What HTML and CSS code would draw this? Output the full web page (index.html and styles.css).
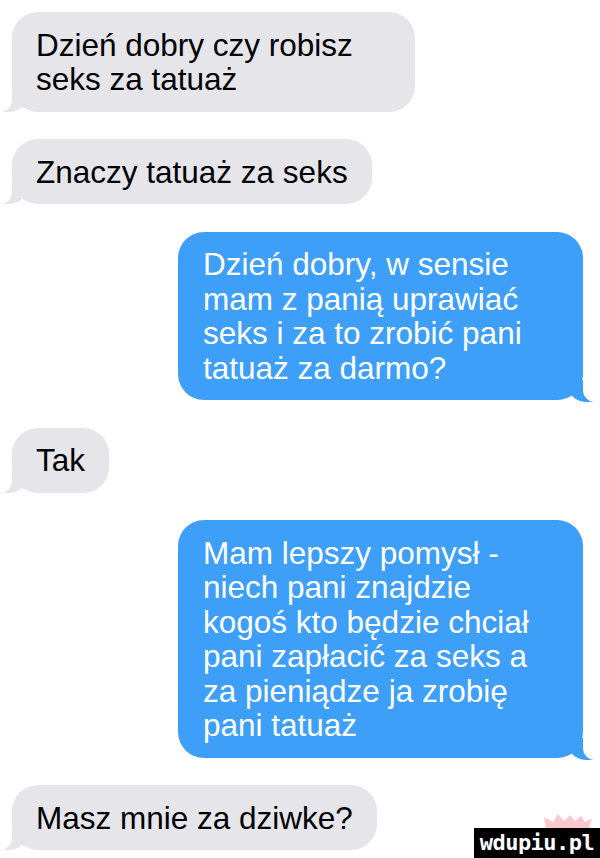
FILE: index.html
```html
<!DOCTYPE html>
<html lang="pl">
<head>
    <meta charset="UTF-8">
    <meta name="viewport" content="width=device-width, initial-scale=1.0">
    <title>Wiadomości</title>
    <link rel="stylesheet" href="styles.css">
</head>
<body>
    <div class="chat">
        <div class="bubble in wide-in">Dzień dobry czy robisz seks za tatuaż</div>
        <div class="bubble in">Znaczy tatuaż za seks</div>
        <div class="bubble out wide">Dzień dobry, w sensie mam z panią uprawiać seks i za to zrobić pani tatuaż za darmo?</div>
        <div class="bubble in">Tak</div>
        <div class="bubble out wide">Mam lepszy pomysł - niech pani znajdzie kogoś kto będzie chciał pani zapłacić za seks a za pieniądze ja zrobię pani tatuaż</div>
        <div class="bubble in">Masz mnie za dziwke?</div>
    </div>

    <div class="watermark">
        <svg class="crown" width="48" height="14" viewBox="0 0 48 14">
            <polygon points="2,14 0,3 9,8 14,0 20,7 26,1 31,7 37,2 41,8 48,4 45,14" fill="#f6b2b8" opacity="0.7"/>
        </svg>
        <div class="logo">wdupiu.pl</div>
    </div>
</body>
</html>
```

FILE: styles.css
```css
body {
    margin: 0;
    background: #fff;
    font-family: "Liberation Sans", Arial, sans-serif;
    height: 858px;
    overflow: hidden;
    position: relative;
}

.chat {
    display: flex;
    flex-direction: column;
    gap: 27.5px;
    padding-top: 12px;
}

.bubble {
    position: relative;
    box-sizing: border-box;
    width: fit-content;
    max-width: 405px;
    padding: 15.5px 24px 15px 24px;
    border-radius: 26px;
    font-size: 31.5px;
    line-height: 34.5px;
}

.in {
    align-self: flex-start;
    margin-left: 12px;
    background: #e5e5ea;
    color: #000;
}

.out {
    align-self: flex-end;
    margin-right: 17px;
    background: #3e9ff9;
    color: #fff;
    padding-left: 25px;
}

.wide {
    width: 405px;
}

.wide-in {
    width: 403px;
}

/* tails */
.in::before,
.in::after,
.out::before,
.out::after {
    content: "";
    position: absolute;
    bottom: 0;
    height: 22px;
}

.in::before {
    left: -10px;
    width: 24px;
    background: #e5e5ea;
    border-bottom-right-radius: 18px 14px;
}

.in::after {
    left: -26px;
    width: 26px;
    background: #fff;
    border-bottom-right-radius: 12px;
}

.out::before {
    right: -10px;
    bottom: -2px;
    width: 24px;
    background: #3e9ff9;
    border-bottom-left-radius: 18px 14px;
}

.out::after {
    right: -26px;
    bottom: -2px;
    width: 26px;
    background: #fff;
    border-bottom-left-radius: 12px;
}

.watermark {
    position: absolute;
    right: 0;
    bottom: 0;
    display: flex;
    flex-direction: column;
    align-items: flex-end;
}

.crown {
    margin-right: 8px;
    display: block;
}

.logo {
    width: 126px;
    height: 30px;
    background: #000;
    color: #fff;
    font-family: "DejaVu Sans Mono", monospace;
    font-weight: bold;
    font-size: 22px;
    line-height: 30px;
    text-align: center;
    letter-spacing: -0.5px;
}
```
